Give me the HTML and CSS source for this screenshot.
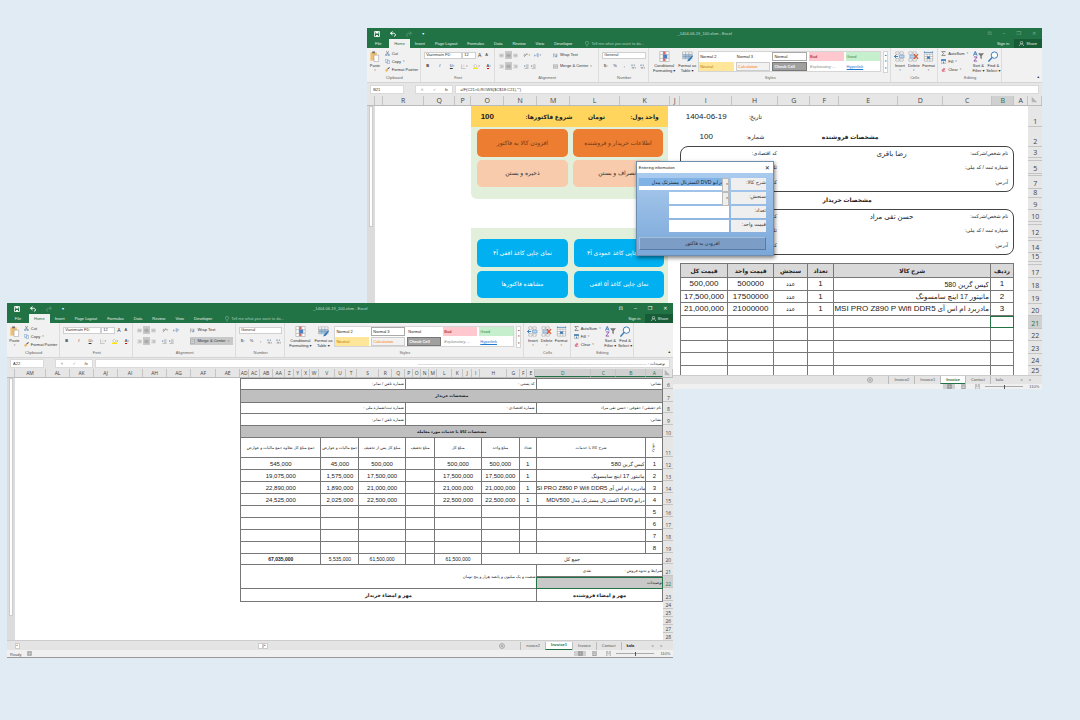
FILE: index.html
```html
<!DOCTYPE html>
<html lang="fa">

<head>
  <meta charset="UTF-8">
  <meta name="viewport" content="width=device-width, initial-scale=1.0">
  <title>Invoice workbook</title>
  <link rel="stylesheet" href="styles.css">
</head>

<body>
  <!-- icon set -->
  <svg class="sprite" xmlns="http://www.w3.org/2000/svg">
    <symbol id="save" viewBox="0 0 12 12"><path d="M1 1h10v10H1z" fill="none" stroke="currentColor" stroke-width="1.6"/><path d="M3 1h6v4H3zM4 8h4v3H4z" fill="currentColor"/></symbol>
    <symbol id="undo" viewBox="0 0 12 12"><path d="M5 1L1 4.500l4 3.500M1 4.500h6c5 0 5 6 1 6" fill="none" stroke="currentColor" stroke-width="2"/></symbol>
    <symbol id="redo" viewBox="0 0 12 12"><path d="M7 1l4 3.500L7 8M11 4.500H5c-5 0-5 6-1 6" fill="none" stroke="currentColor" stroke-width="1.500"/></symbol>
    <symbol id="bulb" viewBox="0 0 10 14"><path d="M3.500 10C3.500 8 1 7 1 4.500a4 4 0 018 0C9 7 6.500 8 6.500 10zM3.500 12.500h3" fill="none" stroke="currentColor"/></symbol>
    <symbol id="person" viewBox="0 0 12 12"><circle cx="6" cy="4" r="3" fill="none" stroke="currentColor" stroke-width="1.300"/><path d="M1 12c0-7 10-7 10 0" fill="none" stroke="currentColor" stroke-width="1.300"/></symbol>
    <symbol id="paste" viewBox="0 0 20 24"><path d="M1 3h14v18H1z" fill="#f0c070"/><path d="M5 1h6v4H5z" fill="#6b6b6b"/><path d="M9 9h10v14H9z" fill="#fff" stroke="#8a8a8a"/></symbol>
    <symbol id="cut" viewBox="0 0 12 12"><path d="M3 0l5 8M9 0L4 8" stroke="#555" stroke-width="1.200"/><circle cx="3" cy="9.500" r="2" fill="none" stroke="#3b78b5" stroke-width="1.300"/><circle cx="9" cy="9.500" r="2" fill="none" stroke="#3b78b5" stroke-width="1.300"/></symbol>
    <symbol id="copy" viewBox="0 0 12 12"><path d="M1 1h6v7H1zM5 4h6v7H5z" fill="#fff" stroke="#4a7fb5"/></symbol>
    <symbol id="brush" viewBox="0 0 12 12"><path d="M0 7l5-3 3 4-5 4z" fill="#f0b75c"/><path d="M6 5l5-4" stroke="#555" stroke-width="2.500"/></symbol>
    <symbol id="lines" viewBox="0 0 12 12"><path d="M1 3h10M1 6h10M1 9h10" stroke="#777"/></symbol>
    <symbol id="lines-r" viewBox="0 0 12 12"><path d="M1 3h10M4 6h7M1 9h10" stroke="#777"/></symbol>
    <symbol id="indent" viewBox="0 0 12 12"><path d="M5 2h6M5 5h6M5 8h6M1 11h10" stroke="#777"/><path d="M0 5h4M2 3L0 5l2 2" fill="none" stroke="#2f75b5"/></symbol>
    <symbol id="angle" viewBox="0 0 12 12"><path d="M2 10L10 2M7 2h3v3" fill="none" stroke="#666"/><circle cx="4" cy="5" r="2" fill="none" stroke="#666"/></symbol>
    <symbol id="para" viewBox="0 0 12 12"><path d="M1 3v6M1 6h5M10 2v8M8 2v8M6 2h5" fill="none" stroke="#4a7fb5"/></symbol>
    <symbol id="wrap" viewBox="0 0 12 12"><path d="M1 1v10M1 3h10M1 7h8" stroke="#777"/><path d="M9 4v5H5" fill="none" stroke="#2f75b5" stroke-width="1.500"/></symbol>
    <symbol id="merge" viewBox="0 0 14 12"><path d="M1 1h12v10H1zM1 4h12M1 8h12" fill="#fff" stroke="#666"/><path d="M4 6h6" stroke="#2f75b5"/></symbol>
    <symbol id="bucket" viewBox="0 0 14 14"><path d="M2 5l4-4 5 5-4 4z" fill="#fff" stroke="#666"/><path d="M0 10h14v4H0z" fill="#ffe600"/></symbol>
    <symbol id="borders" viewBox="0 0 12 12"><path d="M1 1v10h10" fill="none" stroke="#888"/><path d="M6 1v8M3 5h8" stroke="#bbb" stroke-dasharray="1 1"/></symbol>
    <symbol id="decimal" viewBox="0 0 12 12"><path d="M1 3h4M3 1L1 3l2 2" fill="none" stroke="#2f75b5"/><path d="M8 1v4M3 7v4M6 7v4M10 7v4" stroke="#777" stroke-width="1.500"/></symbol>
    <symbol id="cond" viewBox="0 0 24 24"><path d="M2 1h20v22H2zM9 1v22M15 1v22M2 8h20M2 16h20" fill="#fff" stroke="#888"/><path d="M9 1h5v7H9zM9 16h5v6H9z" fill="#d46a6a"/><path d="M9 8h9v8H9z" fill="#4a7fc5"/></symbol>
    <symbol id="table" viewBox="0 0 24 24"><path d="M1 2h21v15H1z" fill="#fff" stroke="#888"/><path d="M2 7h20v10H2z" fill="#9cc2e5"/><path d="M1 7h21M1 12h21M8 2v15M15 2v15" stroke="#888"/><path d="M23 9l-9 9-3 5 6-2 7-10z" fill="#2f75b5"/></symbol>
    <symbol id="ins" viewBox="0 0 24 24"><path d="M4 2h7v5H4zM13 2h7v5h-7zM4 17h7v5H4zM13 17h7v5h-7z" fill="#fff" stroke="#888"/><path d="M12 9h10v6H12z" fill="#bcd4ee" stroke="#4a7fb5"/><path d="M9 12H1M5 8l-4 4 4 4" fill="none" stroke="#2f75b5" stroke-width="2"/></symbol>
    <symbol id="del" viewBox="0 0 24 24"><path d="M2 2h7v5H2zM11 2h7v5h-7zM2 17h7v5H2zM11 17h7v5h-7z" fill="#fff" stroke="#888"/><path d="M4 9h10v6H4z" fill="#bcd4ee" stroke="#4a7fb5"/><path d="M13 7l9 10M22 7l-9 10" stroke="#d9502e" stroke-width="2.500"/></symbol>
    <symbol id="fmt" viewBox="0 0 24 24"><path d="M3 7h18v15H3zM9 7v15M15 7v15M3 12h18M3 17h18" fill="#fff" stroke="#888"/><path d="M9 12h6v5H9z" fill="#2f75b5"/><path d="M3 3h18M3 1v4M21 1v4" stroke="#2f75b5" stroke-width="1.500"/></symbol>
    <symbol id="sum" viewBox="0 0 12 12"><path d="M10 3V1H2l4 5-4 5h8V9" fill="none" stroke="#555" stroke-width="1.500"/></symbol>
    <symbol id="fill" viewBox="0 0 12 12"><path d="M1 1h10v10H1z" fill="#fff" stroke="#777"/><path d="M1 1h10v3H1zM6 4v6M4 8l2 2 2-2" fill="#2f75b5" stroke="#2f75b5"/></symbol>
    <symbol id="clear" viewBox="0 0 12 12"><path d="M1 8l6-6 4 3-5 6H3z" fill="#e37b9c"/><path d="M3 11h8" stroke="#c44"/></symbol>
    <symbol id="sort" viewBox="0 0 24 24"><path d="M1 10l4-9 4 9M3 7h4" fill="none" stroke="#2f75b5" stroke-width="2"/><path d="M2 13h7l-7 9h7" fill="none" stroke="#8e4fa8" stroke-width="2"/><path d="M11 5h13l-5 6v7l-3-2v-5z" fill="#777"/></symbol>
    <symbol id="find" viewBox="0 0 24 24"><circle cx="14" cy="9" r="7" fill="#fff" stroke="#2f75b5" stroke-width="2"/><path d="M9 14l-8 9" stroke="#2f75b5" stroke-width="3"/></symbol>
    <symbol id="plus" viewBox="0 0 12 12"><circle cx="6" cy="6" r="5" fill="none" stroke="#777"/><path d="M6 3v6M3 6h6" stroke="#777"/></symbol>
    <symbol id="grid" viewBox="0 0 12 12"><path d="M1 1h10v10H1zM1 4h10M1 8h10M4 1v10M8 1v10" fill="none" stroke="#777"/></symbol>
    <symbol id="page" viewBox="0 0 12 12"><path d="M1 1h10v10H1zM3 3h6v8H3zM4 5h4M4 7h4" fill="none" stroke="#777"/></symbol>
    <symbol id="break" viewBox="0 0 12 12"><path d="M4 1H1v10h3M8 1h3v10H8M4 1v6h4V1" fill="none" stroke="#777"/></symbol>
    <symbol id="corner" viewBox="0 0 10 10"><path d="M1 1v8h8z" fill="#b5b5b5"/></symbol>
  </svg>

  <!-- title bar, tabs and ribbon, the same in every Excel window -->
  <template id="chrome">
    <div class="title-bar">
      <div class="quick">
        <svg><use href="#save"/></svg>
        <svg><use href="#undo"/></svg>
        <svg class="off"><use href="#redo"/></svg>
        <span>▾</span>
      </div>
      <div class="title">_1404-06-19_100.xlsm - Excel</div>
      <div class="win-buttons"><span>⊡</span><span>–</span><span>❐</span><span>✕</span></div>
    </div>
    <div class="tabs">
      <button class="file">File</button>
      <button class="active">Home</button>
      <button>Insert</button>
      <button>Page Layout</button>
      <button>Formulas</button>
      <button>Data</button>
      <button>Review</button>
      <button>View</button>
      <button>Developer</button>
      <span class="tell"><svg><use href="#bulb"/></svg>Tell me what you want to do...</span>
      <button class="sign">Sign in</button>
      <button class="share"><svg><use href="#person"/></svg>Share</button>
    </div>
    <div class="ribbon">
      <div class="group">
        <div class="tools">
          <button class="big paste"><svg><use href="#paste"/></svg>Paste<i>▾</i></button>
          <div class="stack">
            <button><svg><use href="#cut"/></svg>Cut</button>
            <button><svg><use href="#copy"/></svg>Copy <i>▾</i></button>
            <button><svg><use href="#brush"/></svg>Format Painter</button>
          </div>
        </div>
        <div class="label">Clipboard</div>
      </div>
      <div class="group">
        <div class="rows">
          <div class="line">
            <select class="font" aria-label="Font"><option>Vazirmatn FD</option></select>
            <select class="size" aria-label="Font size"><option>12</option></select>
            <button class="grow">A</button><button>A</button>
          </div>
          <div class="line spread">
            <button><b>B</b></button><button><em>I</em></button><button><u>U</u> <i>▾</i></button>
            <button><svg><use href="#borders"/></svg><i>▾</i></button>
            <button><svg><use href="#bucket"/></svg><i>▾</i></button>
            <button><span class="font-color">A</span><i>▾</i></button>
          </div>
        </div>
        <div class="label">Font</div>
      </div>
      <div class="group">
        <div class="rows two">
          <div class="line">
            <button><svg><use href="#lines"/></svg></button><button class="on"><svg><use href="#lines"/></svg></button><button><svg><use href="#lines"/></svg></button>
            <button class="gap"><svg><use href="#angle"/></svg><i>▾</i></button>
            <button class="gap"><svg><use href="#para"/></svg><i>▾</i></button>
          </div>
          <button class="wrap"><svg><use href="#wrap"/></svg>Wrap Text</button>
          <div class="line">
            <button><svg><use href="#lines-r"/></svg></button><button class="on"><svg><use href="#lines"/></svg></button><button><svg><use href="#lines-r"/></svg></button>
            <button class="gap"><svg><use href="#indent"/></svg></button>
            <button><svg><use href="#indent"/></svg></button>
          </div>
          <button class="merge"><svg><use href="#merge"/></svg>Merge &amp; Center <i>▾</i></button>
        </div>
        <div class="label">Alignment</div>
      </div>
      <div class="group">
        <div class="rows">
          <div class="line"><select class="number" aria-label="Number format"><option>General</option></select></div>
          <div class="line spread">
            <button>$ <i>▾</i></button><button>%</button><button><b>,</b></button>
            <button><svg><use href="#decimal"/></svg></button><button><svg><use href="#decimal"/></svg></button>
          </div>
        </div>
        <div class="label">Number</div>
      </div>
      <div class="group">
        <div class="tools">
          <button class="big cond"><svg><use href="#cond"/></svg>Conditional<br>Formatting ▾</button>
          <button class="big"><svg><use href="#table"/></svg>Format as<br>Table ▾</button>
          <div class="gallery">
            <button>Normal 2</button><button class="n3">Normal 3</button><button class="normal">Normal</button><button class="bad">Bad</button><button class="good">Good</button>
            <button class="neutral">Neutral</button><button class="calc">Calculation</button><button class="check">Check Cell</button><button class="expl">Explanatory ...</button><button class="link">Hyperlink</button>
          </div>
          <div class="more"><span>▴</span><span>▾</span><span>▾</span></div>
        </div>
        <div class="label">Styles</div>
      </div>
      <div class="group">
        <div class="tools even">
          <button class="big"><svg><use href="#ins"/></svg>Insert<i>▾</i></button>
          <button class="big"><svg><use href="#del"/></svg>Delete<i>▾</i></button>
          <button class="big"><svg><use href="#fmt"/></svg>Format<i>▾</i></button>
        </div>
        <div class="label">Cells</div>
      </div>
      <div class="group last">
        <div class="tools">
          <div class="stack">
            <button><svg><use href="#sum"/></svg>AutoSum <i>▾</i></button>
            <button><svg><use href="#fill"/></svg>Fill <i>▾</i></button>
            <button><svg><use href="#clear"/></svg>Clear <i>▾</i></button>
          </div>
          <button class="big"><svg><use href="#sort"/></svg>Sort &amp;<br>Filter ▾</button>
          <button class="big"><svg><use href="#find"/></svg>Find &amp;<br>Select ▾</button>
        </div>
        <div class="label">Editing</div>
      </div>
      <div class="collapse">▴</div>
    </div>
  </template>

  <main class="desktop">

    <section class="window seller">
      <div class="chrome"></div>
      <div class="formula-bar">
        <input class="name-box" aria-label="Name box" value="B21">
        <div class="fx"><span>✕</span><span>✓</span><em>fx</em></div>
        <input class="formula" aria-label="Formula" value='=IF(C21&gt;0,ROWS($C$18:C21),"")'>
      </div>
      <div class="columns">
        <span></span><span></span><span>R</span><span>Q</span><span>P</span><span>O</span><span>N</span><span>M</span><span>L</span><span>K</span><span>J</span><span>I</span><span>H</span><span>G</span><span>F</span><span>E</span><span>D</span><span>C</span><span class="sel">B</span><span>A</span><span><svg><use href="#corner"/></svg></span>
      </div>
      <div class="sheet">
        <div class="scroll"><div class="thumb"></div></div>
        <div></div>
        <div class="panel" dir="rtl">
          <div class="settings">
            <b>واحد پول:</b><b>تومان</b><b class="start">شروع فاکتورها:</b><b>100</b>
          </div>
          <div class="actions">
            <button class="orange">اطلاعات خریدار و فروشنده</button>
            <button class="orange">افزودن کالا به فاکتور</button>
            <button class="peach">انصراف و بستن</button>
            <button class="peach">ذخیره و بستن</button>
          </div>
          <div class="actions prints">
            <button>نمای چاپی کاغذ عمودی آ۴</button>
            <button>نمای چاپی کاغذ افقی آ۴</button>
            <button>نمای چاپی کاغذ آ۵ افقی</button>
            <button>مشاهده فاکتورها</button>
          </div>
        </div>
        <div></div>
        <div class="invoice" dir="rtl">
          <div class="head">
            <span></span><span>تاریخ:</span><span class="num">1404-06-19</span>
            <b>مشخصات فروشنده</b><span>شماره:</span><span class="num">100</span>
          </div>
          <div class="party">
            <span>نام شخص/شرکت:</span><span class="value">رضا باقری</span><span></span><span>کد اقتصادی:</span>
            <span>شماره ثبت / کد ملی:</span><span></span><span></span><span>تلفن:</span>
            <span>آدرس:</span><span></span><span></span><span>کد پستی:</span>
          </div>
          <b class="party-title">مشخصات خریدار</b>
          <div class="party">
            <span>نام شخص/شرکت:</span><span class="value">حسن تقی مراد</span><span></span><span>کد اقتصادی:</span>
            <span>شماره ثبت / کد ملی:</span><span></span><span></span><span>تلفن:</span>
            <span>آدرس:</span><span></span><span></span><span>کد پستی:</span>
          </div>
          <table class="items">
            <thead>
              <tr><th>ردیف</th><th>شرح کالا</th><th>تعداد</th><th>سنجش</th><th>قیمت واحد</th><th>قیمت کل</th></tr>
            </thead>
            <tbody>
              <tr><td>1</td><td>کیس گرین 580</td><td>1</td><td>عدد</td><td>500000</td><td>500,000</td></tr>
              <tr><td>2</td><td>مانیتور 17 اینچ سامسونگ</td><td>1</td><td>عدد</td><td>17500000</td><td>17,500,000</td></tr>
              <tr><td>3</td><td>مادربرد ام اس آی <bdi>MSI PRO Z890 P Wifi DDR5</bdi></td><td>1</td><td>عدد</td><td>21000000</td><td>21,000,000</td></tr>
              <tr><td class="picked"></td><td></td><td></td><td></td><td></td><td></td></tr>
              <tr><td></td><td></td><td></td><td></td><td></td><td></td></tr>
              <tr><td></td><td></td><td></td><td></td><td></td><td></td></tr>
              <tr><td></td><td></td><td></td><td></td><td></td><td></td></tr>
              <tr><td></td><td></td><td></td><td></td><td></td><td></td></tr>
            </tbody>
          </table>
        </div>
        <div></div>
        <div class="row-numbers">
          <span>1</span><span>2</span><span>3</span><span></span><span>5</span><span></span><span>7</span><span>8</span><span>9</span><span>10</span><span></span><span>12</span><span></span><span>14</span><span>15</span><span></span><span>17</span><span>18</span><span>19</span><span>20</span><span class="sel">21</span><span>22</span><span>23</span><span>24</span><span>25</span>
        </div>
      </div>
      <div class="sheet-tabs">
        <div class="hscroll"></div>
        <svg><use href="#plus"/></svg>
        <button>Invoice2</button><button>Invoice1</button><button class="active">Invoice</button><button>Contact</button><button>kala</button>
        <div class="arrows"><span>◂</span><span>▸</span></div>
      </div>
      <div class="status">
        <span class="ready"></span>
        <span class="view on"><svg><use href="#grid"/></svg></span><span class="view"><svg><use href="#page"/></svg></span><span class="view"><svg><use href="#break"/></svg></span>
        <input type="range" aria-label="Zoom"><span class="percent">110%</span>
      </div>

      <form class="dialog">
        <div class="dialog-title">Entering information<span>✕</span></div>
        <div class="dialog-body" dir="rtl">
          <label for="item">شرح کالا:</label>
          <div class="combo wide"><select id="item"><option>درایو DVD اکسترنال مسترتک مدل</option></select></div>
          <label for="unit">سنجش:</label>
          <div class="combo"><select id="unit"><option></option></select></div>
          <label for="count">تعداد:</label>
          <input id="count" type="text">
          <label for="price">قیمت واحد:</label>
          <input id="price" type="text">
          <button type="button">افزودن به فاکتور</button>
        </div>
      </form>
    </section>

    <section class="window buyer">
      <div class="chrome"></div>
      <div class="formula-bar">
        <input class="name-box" aria-label="Name box" value="A22">
        <div class="fx"><span>✕</span><span>✓</span><em>fx</em></div>
        <input class="formula" dir="rtl" aria-label="Formula" value="توضیحات : ..............................................................................................................................................................................................................">
      </div>
      <div class="columns">
        <span></span><span>AM</span><span>AL</span><span>AK</span><span>AJ</span><span>AI</span><span>AH</span><span>AG</span><span>AF</span><span>AE</span><span>AD</span><span>AC</span><span>AB</span><span>AA</span><span>Z</span><span>Y</span><span>X</span><span>W</span><span>V</span><span>U</span><span>T</span><span>S</span><span>R</span><span>Q</span><span>P</span><span>O</span><span>N</span><span>M</span><span>L</span><span>K</span><span>J</span><span>I</span><span>H</span><span>G</span><span>F</span><span>E</span><span class="sel">D</span><span class="sel">C</span><span class="sel">B</span><span class="sel">A</span><span><svg><use href="#corner"/></svg></span>
      </div>
      <div class="sheet">
        <div class="scroll"><div class="thumb"></div></div>
        <div></div>
        <div dir="rtl">
          <table class="bill">
            <colgroup><col class="c-row"><col class="c-desc"><col class="c-count"><col class="c-unit"><col class="c-total"><col class="c-off"><col class="c-net"><col class="c-tax"><col class="c-sum"></colgroup>
            <tr class="info"><td colspan="2">نشانی:</td><td colspan="4">کد پستی :</td><td colspan="3">شماره تلفن / نمابر:</td></tr>
            <tr class="band tall"><th colspan="9">مشخصات خریدار</th></tr>
            <tr class="info strong"><td colspan="2">نام حقیقی / حقوقی : حسن تقی مراد</td><td colspan="4">شماره اقتصادی :</td><td colspan="3">شماره ثبت/شماره ملی :</td></tr>
            <tr class="info"><td colspan="6">نشانی:</td><td colspan="3">شماره تلفن / نمابر:</td></tr>
            <tr class="band"><th colspan="9">مشخصات کالا یا خدمات مورد معامله</th></tr>
            <tr class="heads"><th><span>ردیف</span></th><th>شرح کالا یا خدمات</th><th>تعداد</th><th>مبلغ واحد</th><th>مبلغ کل</th><th>مبلغ تخفیف</th><th>مبلغ کل پس از تخفیف</th><th>جمع مالیات و عوارض</th><th>جمع مبلغ کل بعلاوه جمع مالیات و عوارض</th></tr>
            <tr><td>1</td><td class="desc">کیس گرین <bdi>580</bdi></td><td>1</td><td>500,000</td><td>500,000</td><td></td><td>500,000</td><td>45,000</td><td>545,000</td></tr>
            <tr><td>2</td><td class="desc">مانیتور <bdi>17</bdi> اینچ سامسونگ</td><td>1</td><td>17,500,000</td><td>17,500,000</td><td></td><td>17,500,000</td><td>1,575,000</td><td>19,075,000</td></tr>
            <tr><td>3</td><td class="desc">مادربرد ام اس آی <bdi>SI PRO Z890 P Wifi DDR5</bdi></td><td>1</td><td>21,000,000</td><td>21,000,000</td><td></td><td>21,000,000</td><td>1,890,000</td><td>22,890,000</td></tr>
            <tr><td>4</td><td class="desc">درایو <bdi>DVD</bdi> اکسترنال مسترتک مدل <bdi>MDV500</bdi></td><td>1</td><td>22,500,000</td><td>22,500,000</td><td></td><td>22,500,000</td><td>2,025,000</td><td>24,525,000</td></tr>
            <tr><td>5</td><td></td><td></td><td></td><td></td><td></td><td></td><td></td><td></td></tr>
            <tr><td>6</td><td></td><td></td><td></td><td></td><td></td><td></td><td></td><td></td></tr>
            <tr><td>7</td><td></td><td></td><td></td><td></td><td></td><td></td><td></td><td></td></tr>
            <tr><td>8</td><td></td><td></td><td></td><td></td><td></td><td></td><td></td><td></td></tr>
            <tr class="totals"><td colspan="4">جمع کل</td><td>61,500,000</td><td></td><td>61,500,000</td><td>5,535,000</td><td><b>67,035,000</b></td></tr>
            <tr class="terms"><td colspan="2"><div><span>شرایط و نحوه فروش :</span><span>نقدی</span></div></td><td colspan="7" rowspan="2">شصت و یک میلیون و پانصد هزار و پنج تومان</td></tr>
            <tr class="terms"><td colspan="2" class="picked">توضیحات</td></tr>
            <tr class="signs"><td colspan="2">مهر و امضاء فروشنده</td><td colspan="7">مهر و امضاء خریدار</td></tr>
          </table>
        </div>
        <div class="row-numbers">
          <span>6</span><span>7</span><span>8</span><span>9</span><span>10</span><span>11</span><span>12</span><span>13</span><span>14</span><span>15</span><span>16</span><span>17</span><span>18</span><span>19</span><span>20</span><span>21</span><span class="sel">22</span><span>23</span><span>24</span><span>25</span><span>26</span><span>27</span><span>28</span>
        </div>
      </div>
      <div class="sheet-tabs">
        <div class="hscroll"><span>◂</span><span class="hthumb"></span><span>▸</span></div>
        <svg><use href="#plus"/></svg>
        <button>nvoice2</button><button class="active">Invoice1</button><button>Invoice</button><button>Contact</button><button class="dark">kala</button>
        <div class="arrows"><span>◂</span><span>▸</span></div>
      </div>
      <div class="status">
        <span class="ready">Ready <svg><use href="#grid"/></svg></span>
        <span class="view on"><svg><use href="#grid"/></svg></span><span class="view"><svg><use href="#page"/></svg></span><span class="view"><svg><use href="#break"/></svg></span>
        <input type="range" aria-label="Zoom"><span class="percent">110%</span>
      </div>
    </section>

  </main>
  <script>
    const chrome = document.getElementById("chrome");
    document.querySelectorAll(".chrome").forEach(function (el) {
      el.appendChild(chrome.content.cloneNode(true));
    });
  </script>
</body>

</html>
```
FILE: styles.css
```css
* {
  box-sizing: border-box;
}

body {
  margin: 0;
  background: #e0ebf3;
  font-family: "Liberation Sans", "DejaVu Sans", sans-serif;
  font-size: 4px;
  color: #333;
}

button,
input,
select {
  font: inherit;
  color: inherit;
  margin: 0;
  padding: 0;
  border: none;
  border-radius: 0;
  background: none;
  min-width: 0;
}

select {
  appearance: none;
}

.sprite {
  display: none;
}

.desktop {
  position: relative;
  min-height: 100vh;
  overflow: hidden;
}

/* windows */
.window {
  position: absolute;
  background: #fff;
  line-height: 1;
}

.seller {
  top: 28px;
  left: 34%;
  width: 62.5%;
}

.buyer {
  top: 303px;
  left: 7px;
  width: 61.7%;
  border-bottom: 1px solid #999;
}

/* title bar and tabs */
.title-bar {
  display: grid;
  grid-template-columns: 1fr auto 1fr;
  align-items: center;
  height: 11px;
  background: #217346;
  color: #fff;
}

.quick {
  display: flex;
  align-items: center;
  gap: 10px;
  padding-left: 7px;
}

.quick svg {
  width: 6px;
  height: 6px;
}

.off {
  opacity: 0.3;
}

.title {
  color: #c5dccf;
}

.win-buttons {
  display: flex;
  justify-content: flex-end;
  gap: 11px;
  padding-right: 6px;
  font-size: 5px;
}

.seller .win-buttons {
  opacity: 0.4;
}

.tabs {
  display: flex;
  height: 9px;
  background: #217346;
  color: #e4f0e9;
}

.tabs button {
  padding: 0 5px;
}

.tabs .file {
  width: 22px;
}

.tabs .active {
  background: #f1f1f1;
  color: #217346;
}

.tell {
  display: flex;
  align-items: center;
  gap: 2px;
  margin-right: auto;
  padding-left: 8px;
  color: #a6cbb6;
}

.tell svg {
  width: 4px;
  height: 6px;
}

.tabs .share {
  display: flex;
  align-items: center;
  justify-content: center;
  gap: 2px;
  width: 28px;
  background: #185c37;
}

.share svg {
  width: 5px;
  height: 5px;
}

/* ribbon */
.ribbon {
  display: grid;
  grid-template-columns: 54fr 74fr 104fr 50fr 242fr 47fr 64fr 40fr;
  height: 35px;
  background: #f1f1f1;
  border-bottom: 1px solid #d5d5d5;
}

.group {
  display: flex;
  flex-direction: column;
  min-width: 0;
  padding: 3px 2px 2px 3px;
  border-right: 1px solid #dcdcdc;
  white-space: nowrap;
}

.label {
  margin-top: auto;
  text-align: center;
  color: #666;
}

.tools {
  display: flex;
  gap: 2px;
}

.even {
  justify-content: space-around;
}

.big {
  display: flex;
  flex-direction: column;
  align-items: center;
  text-align: center;
  line-height: 5px;
}

.big svg {
  width: 11px;
  height: 11px;
  margin-bottom: 1px;
}

.cond {
  width: 24px;
}

.ribbon i {
  font-style: normal;
  font-size: 3px;
  color: #888;
}

.stack {
  display: flex;
  flex-direction: column;
  gap: 3px;
  padding-left: 3px;
}

.last .stack {
  width: 34px;
  padding-left: 0;
}

.last .tools {
  gap: 4px;
}

.stack button,
.wrap,
.merge {
  display: flex;
  align-items: center;
  gap: 2px;
}

.stack svg,
.line svg,
.wrap svg,
.merge svg {
  width: 5px;
  height: 5px;
}

.rows {
  display: flex;
  flex-direction: column;
  gap: 3px;
}

.two {
  display: grid;
  grid-template-columns: 54fr 45fr;
}

.line {
  display: flex;
  align-items: center;
  height: 8px;
}

.line button {
  display: flex;
  align-items: center;
  justify-content: center;
  min-width: 7px;
  height: 7px;
}

.line .on {
  height: 8px;
  background: #c8c8c8;
}

.line .gap {
  margin-left: 4px;
}

.spread {
  justify-content: space-between;
}

.line select {
  height: 7px;
  padding: 0 1px;
  background: #fff;
  border: 1px solid #d0d0d0;
}

.line .font {
  width: 38px;
}

.line .size {
  width: 14px;
}

.line .number {
  width: 100%;
}

.grow {
  font-size: 5px;
}

.font-color {
  border-bottom: 1px solid #e00;
}

.buyer .merge {
  background: #c8c8c8;
}

.gallery {
  display: grid;
  flex: 1;
  grid-template-columns: repeat(5, minmax(0, 1fr));
  gap: 1px 2px;
  height: 21px;
  background: #fff;
  border: 1px solid #d5d5d5;
}

.gallery button {
  padding: 0 1px;
  overflow: hidden;
  text-align: left;
  color: #222;
}

.gallery .normal {
  border: 1px solid #aaa;
}

.gallery .bad {
  background: #ffc7ce;
  color: #9c0006;
}

.gallery .good {
  background: #c6efce;
  color: #3c8a4a;
}

.gallery .neutral {
  background: #ffe699;
  color: #b07a10;
}

.gallery .calc {
  background: #f2f2f2;
  border: 1px solid #ccc;
  color: #fa7d00;
}

.gallery .check {
  background: #a0a0a0;
  border: 1px solid #777;
  color: #fff;
  font-weight: bold;
}

.gallery .expl {
  color: #888;
  font-style: italic;
}

.gallery .link {
  color: #1f77d0;
  text-decoration: underline;
}

.buyer .gallery .n3 {
  border: 1px solid #aaa;
}

.buyer .gallery .normal {
  border: none;
}

.more {
  display: flex;
  flex-direction: column;
  justify-content: space-around;
  align-items: center;
  width: 5px;
  background: #fff;
  border: 1px solid #d5d5d5;
  font-size: 3px;
}

.collapse {
  align-self: end;
  padding: 0 3px 3px;
  text-align: right;
}

/* formula bar */
.formula-bar {
  display: flex;
  gap: 2px;
  height: 13px;
  padding: 2px 3px;
  background: #e6e6e6;
}

.name-box,
.fx,
.formula {
  background: #fff;
  border: 1px solid #dadada;
}

.name-box {
  width: 34px;
  margin-right: 9px;
  padding: 0 2px;
}

.fx {
  display: flex;
  align-items: center;
  justify-content: space-around;
  width: 38px;
  color: #999;
}

.fx em {
  color: #333;
}

.formula {
  flex: 1;
  padding: 0 4px;
}

.buyer .formula-bar {
  height: 11px;
  padding: 1px 3px;
}

/* column letters and row numbers */
.columns {
  display: grid;
  height: 10px;
  background: #e6e6e6;
  border-bottom: 1px solid #bbb;
  font-family: "Open Sans", sans-serif;
  font-size: 7px;
  line-height: 9px;
  text-align: center;
  color: #444;
}

.columns span {
  min-width: 0;
  overflow: hidden;
  border-right: 1px solid #c4c4c4;
}

.columns svg {
  width: 7px;
  height: 7px;
}

.columns .sel,
.row-numbers .sel {
  background: #d0d0d0;
  color: #217346;
}

.seller .columns {
  grid-template-columns: 8fr 8fr 41fr 31fr 16fr 33fr 33fr 33fr 50fr 50fr 10fr 52fr 46fr 32fr 29fr 59fr 45fr 49fr 22fr 14fr 14fr;
}

.buyer .columns {
  grid-template-columns: 8fr 31fr 24fr 24fr 24fr 25fr 24fr 24fr 25fr 24fr 9fr 11fr 13fr 12fr 9fr 8fr 8fr 9fr 16fr 11fr 11fr 22fr 13fr 13fr 8fr 8fr 8fr 8fr 15fr 11fr 9fr 8fr 27fr 13fr 7fr 8fr 56fr 25fr 30fr 17fr 10fr;
  height: 9px;
  font-size: 5px;
  line-height: 8px;
}

.buyer .columns .sel {
  border-bottom: 1px solid #217346;
}

.row-numbers {
  display: grid;
  background: #e6e6e6;
  font-family: "Open Sans", sans-serif;
  font-size: 7px;
  line-height: 8px;
  text-align: center;
  color: #444;
}

.row-numbers span {
  display: flex;
  align-items: flex-end;
  justify-content: center;
  min-height: 0;
  border-bottom: 1px solid #c4c4c4;
}

.seller .row-numbers {
  grid-template-rows: 21px 20px 11px 3px 13px 2px 13px 9px 12px 12px 3px 13px 3px 12px 9px 3px 13px 13px 13px 12px 13px 12px 13px 12px 10px;
}

.buyer .row-numbers {
  grid-template-rows: 11px 13px 11px 12px 12px 20px repeat(8, 12px) 11px 12px 12px 13px repeat(5, 8px);
  font-size: 5px;
  line-height: 6px;
}

/* sheet */
.sheet {
  display: grid;
  height: 269px;
  overflow: hidden;
}

.seller .sheet {
  grid-template-columns: 8fr 96fr 197fr 12fr 334fr 14fr 14fr;
}

.buyer .sheet {
  grid-template-columns: 8fr 225fr 423fr 10fr;
  height: 262px;
}

.scroll {
  padding: 0 2px;
  background: #dcdcdc;
}

.thumb {
  height: 121px;
  background: #fff;
  border: 1px solid #ccc;
}

.buyer .thumb {
  height: 238px;
}

/* control panel */
.settings {
  display: grid;
  grid-template-columns: 49fr 50fr 42fr 56fr;
  align-items: center;
  height: 21px;
  background: #ffd55e;
  font-size: 6px;
  text-align: center;
  color: #222;
  white-space: nowrap;
}

.settings b:last-child {
  padding-right: 22px;
  font-size: 8px;
}

.actions {
  display: grid;
  grid-template-columns: 1fr 1fr;
  gap: 3px 5px;
  height: 72px;
  padding: 2px 5px 12px 6px;
  background: #e2efda;
  border-radius: 0 0 6px 6px;
}

.actions button {
  border-radius: 5px;
  font-size: 6px;
  white-space: nowrap;
}

.actions .orange {
  background: #ed7d31;
  color: #6b3b16;
}

.actions .peach {
  background: #f8cbad;
  color: #333;
}

.prints {
  height: 84px;
  margin-top: 29px;
  padding: 11px 4px 14px 6px;
  border-radius: 0;
  gap: 4px 6px;
}

.prints button {
  background: #00b0f0;
  color: #fff;
}

/* invoice */
.invoice {
  font-size: 6px;
  color: #222;
}

.head {
  display: grid;
  grid-template-columns: 236fr 46fr 52fr;
  grid-template-rows: 21px 19px;
  align-items: center;
  text-align: center;
}

.head b {
  padding-right: 92px;
}

.num {
  font-size: 8px;
}

.party {
  display: grid;
  grid-template-columns: 65fr 104fr 63fr 96fr;
  grid-template-rows: 12px 16px 14px;
  align-items: center;
  height: 46px;
  padding-right: 5px;
  border: 1px solid #444;
  border-radius: 8px;
  font-size: 5px;
  white-space: nowrap;
}

.party .value {
  font-size: 7px;
  text-align: center;
}

.party-title {
  display: block;
  height: 17px;
  line-height: 16px;
  text-align: center;
}

.items {
  width: 100%;
  margin-top: 8px;
  table-layout: fixed;
  border-collapse: collapse;
}

.items th,
.items td {
  height: 13px;
  padding: 0;
  border: 1px solid #777;
  text-align: center;
  font-size: 8px;
  white-space: nowrap;
  overflow: hidden;
}

.items th {
  height: 14px;
  background: #d9d9d9;
  font-size: 6px;
}

.items tr:nth-child(even) td {
  height: 12px;
}

.items th:nth-child(1) { width: 7%; }
.items th:nth-child(2) { width: 47%; }
.items th:nth-child(3) { width: 8%; }
.items th:nth-child(4) { width: 10%; }
.items th:nth-child(5) { width: 14%; }

.items td:nth-child(2) {
  padding-right: 1px;
  text-align: right;
  font-size: 7px;
}

.items td:nth-child(4) {
  font-size: 6px;
}

.items bdi {
  font-size: 8px;
}

.items .picked {
  outline: 1px solid #217346;
  outline-offset: -1px;
}

/* printed bill */
.bill {
  width: 100%;
  table-layout: fixed;
  border-collapse: collapse;
  color: #222;
}

.c-row { width: 4%; }
.c-desc { width: 26%; }
.c-count { width: 4%; }
.c-unit { width: 9%; }
.c-total { width: 11%; }
.c-off { width: 7%; }
.c-net { width: 11%; }
.c-tax { width: 9%; }
.c-sum { width: 19%; }

.bill td,
.bill th {
  height: 12px;
  padding: 0;
  border: 1px solid #777;
  text-align: center;
  font-size: 6px;
  white-space: nowrap;
  overflow: hidden;
}

.bill .info td {
  padding-right: 1px;
  text-align: right;
  font-size: 4px;
}

.bill tr:first-child td,
.bill .strong td {
  height: 11px;
}

.bill .band th {
  background: #bfbfbf;
  font-size: 4px;
}

.bill .tall th {
  height: 13px;
}

.bill .heads th {
  height: 20px;
  font-size: 4px;
  font-weight: normal;
}

.heads span {
  writing-mode: vertical-rl;
}

.bill .desc {
  padding-right: 1px;
  text-align: right;
  font-size: 5px;
}

.desc bdi {
  font-size: 6px;
}

.bill .totals td {
  height: 11px;
  font-size: 5px;
}

.bill .terms td {
  text-align: right;
  font-size: 4px;
}

.terms div {
  display: grid;
  grid-template-columns: 50% 20%;
  text-align: center;
}

.terms span:first-child {
  text-align: right;
}

.bill .terms .picked {
  background: #c9c9c9;
  outline: 1px solid #217346;
  outline-offset: -1px;
}

.bill .signs td {
  height: 13px;
  font-size: 5px;
  font-weight: bold;
}

/* sheet tabs and status bar */
.sheet-tabs {
  display: flex;
  align-items: center;
  height: 10px;
  background: #e4e4e4;
  border-top: 1px solid #ccc;
  font-size: 4px;
  color: #555;
}

.seller .sheet-tabs {
  height: 9px;
}

.hscroll {
  display: flex;
  justify-content: flex-end;
  width: 38%;
  margin-left: 8px;
  margin-right: auto;
}

.hscroll span {
  width: 5px;
  height: 6px;
  background: #fff;
  border: 1px solid #ccc;
  font-size: 3px;
}

.hscroll span:first-child {
  margin-right: auto;
}

.sheet-tabs svg {
  width: 6px;
  height: 6px;
  margin-right: 15px;
}

.sheet-tabs button {
  height: 8px;
  padding: 0 5px;
  border-left: 1px solid #bbb;
}

.sheet-tabs .active {
  background: #fff;
  border-bottom: 1px solid #217346;
  color: #217346;
  font-weight: bold;
}

.sheet-tabs .dark {
  color: #222;
  font-weight: bold;
}

.arrows {
  display: flex;
  gap: 7px;
  width: 34px;
  padding-left: 12px;
  color: #999;
}

.status {
  display: flex;
  align-items: center;
  gap: 2px;
  height: 7px;
  padding: 0 3px;
  background: #f0f0f0;
  font-size: 4px;
  color: #555;
}

.seller .status {
  height: 5px;
  overflow: hidden;
}

.ready {
  margin-right: auto;
}

.status svg {
  width: 5px;
  height: 5px;
}

.ready svg {
  margin-left: 4px;
}

.view {
  display: flex;
  justify-content: center;
  width: 12px;
}

.view.on {
  background: #cfcfcf;
}

.status input {
  appearance: none;
  width: 38px;
  height: 1px;
  background: #aaa;
}

.status input::-webkit-slider-thumb {
  appearance: none;
  width: 1px;
  height: 4px;
  background: #555;
}

.percent {
  width: 14px;
  text-align: right;
}

/* dialog */
.dialog {
  position: absolute;
  top: 133px;
  left: 39.8%;
  width: 138px;
  border: 1px solid #6f8fb0;
  box-shadow: 1px 2px 4px rgba(0, 0, 0, 0.5);
}

.dialog-title {
  display: flex;
  align-items: center;
  justify-content: space-between;
  height: 11px;
  padding: 0 3px 0 2px;
  background: #fff;
  color: #222;
  font-size: 4px;
}

.dialog-title span {
  font-size: 6px;
}

.dialog-body {
  display: grid;
  grid-template-columns: 35px 60px 28px;
  grid-template-rows: repeat(4, 12px) 16px;
  gap: 2px;
  padding: 5px 7px 5px 4px;
  background: linear-gradient(#a9cbee, #7ba7d9);
}

.dialog-body label {
  grid-column: 1;
  background: #efefef;
  font-size: 5px;
  line-height: 8px;
}

.combo {
  position: relative;
}

.wide {
  grid-column: 2 / 4;
}

.dialog-body select,
.dialog-body input {
  width: 100%;
  height: 12px;
  background: #fff;
}

.dialog-body .wide select {
  padding-right: 6px;
  padding-bottom: 3px;
  background: linear-gradient(#7fb2e5 8px, #fff 8px);
  font-size: 5px;
  color: #123;
}

.combo::after {
  content: "▾";
  position: absolute;
  top: 0;
  right: 0;
  width: 5px;
  height: 12px;
  background: #eee;
  border: 1px solid #bbb;
  font-size: 3px;
  line-height: 10px;
}

.dialog-body button {
  grid-column: 1 / 4;
  height: 13px;
  margin-top: 3px;
  background: #7c9dc6;
  border: 1px solid #a5bedd;
  border-right-color: #5a7ba5;
  border-bottom-color: #5a7ba5;
  font-size: 5px;
  color: #1c2c44;
}
```
